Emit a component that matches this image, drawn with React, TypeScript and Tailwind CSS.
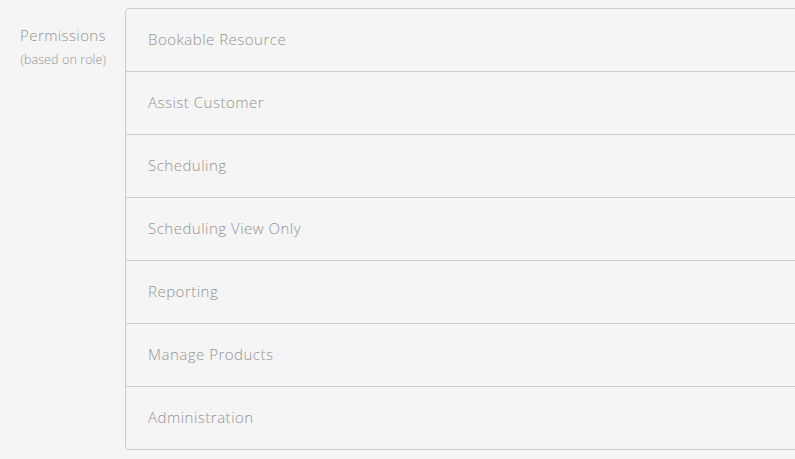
import React from "react";

const permissions = [
  "Bookable Resource",
  "Assist Customer",
  "Scheduling",
  "Scheduling View Only",
  "Reporting",
  "Manage Products",
  "Administration",
];

export default function App() {
  return (
    <div
      className="w-[795px] h-[459px] overflow-hidden bg-[#f5f5f5] flex pt-[8px]"
      style={{ fontFamily: "'Open Sans', Lato, sans-serif" }}
    >
      {/* Label */}
      <div className="w-[125px] shrink-0 pr-[19px] pt-[17px] text-right font-light text-[#939393]">
        <div className="text-[15px] leading-[20px] tracking-[0.4px]">Permissions</div>
        <div className="text-[12.5px] leading-[16px] mt-[7px] tracking-[0.1px]">(based on role)</div>
      </div>

      {/* Permission list */}
      <div className="w-[720px] shrink-0 self-start border border-[#cccccc] rounded-[4px] bg-[#f5f5f5]">
        {permissions.map((p, i) => (
          <div
            key={p}
            className={
              "flex items-center pl-[22px] pb-[1px] text-[15px] font-light tracking-[0.5px] text-[#939393] " +
              (i > 0 ? "h-[63px] border-t border-[#cccccc]" : "h-[62px]")
            }
          >
            {p}
          </div>
        ))}
      </div>
    </div>
  );
}
